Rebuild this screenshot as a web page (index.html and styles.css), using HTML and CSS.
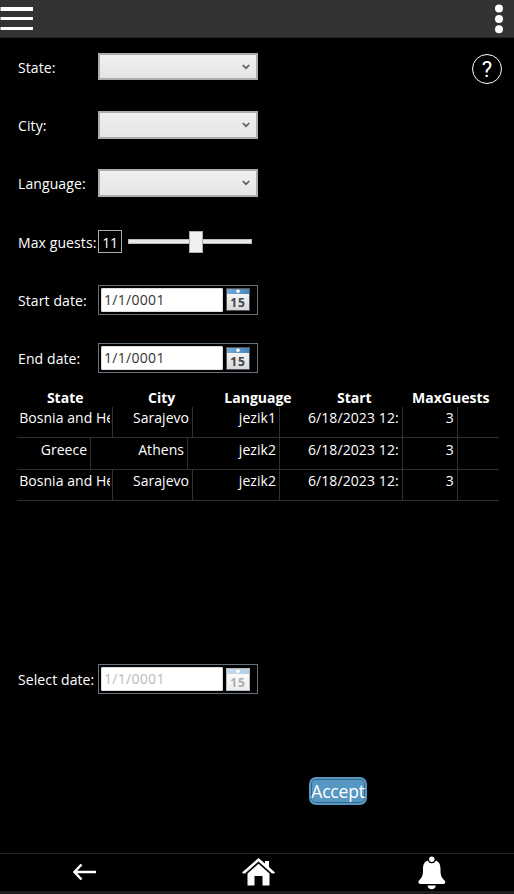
FILE: index.html
```
<!DOCTYPE html>
<html lang="en">
<head>
<meta charset="utf-8">
<title>Tours</title>
<link rel="stylesheet" href="styles.css">
</head>
<body>
<svg width="0" height="0" class="defs" aria-hidden="true">
  <defs>
    <linearGradient id="paper" x1="0" y1="0" x2="0" y2="1"><stop offset="0" stop-color="#fff"/><stop offset="1" stop-color="#d4d6da"/></linearGradient>
    <linearGradient id="strip" x1="0" y1="0" x2="1" y2="0"><stop offset="0" stop-color="#78a9d4"/><stop offset="1" stop-color="#4384bd"/></linearGradient>
    <symbol id="calendar" viewBox="0 0 24 23">
      <rect x=".5" y=".5" width="23" height="22" fill="url(#paper)" stroke="#555"/>
      <rect x="1" y="1" width="22" height="5" fill="url(#strip)"/>
      <circle cx="12" cy="3.2" r="1.8" fill="#fff"/>
    </symbol>
    <symbol id="chevron" viewBox="0 0 8 6"><path d="M.7 1 4 4.2 7.3 1" fill="none" stroke="#606060" stroke-width="1.7"/></symbol>
  </defs>
</svg>
<header class="topbar">
  <svg class="menu" width="33" height="24" viewBox="0 0 33 24"><path fill="#fff" d="M1 0h32v4H1zM1 10h32v3H1zM1 20h32v3H1z"/><path fill="#999" d="M0 0h1v4H0zM0 10h1v3H0zM0 20h1v3H0z"/></svg>
  <svg width="10" height="30" viewBox="0 0 10 30" fill="#fff"><circle cx="5" cy="4.5" r="4"/><circle cx="5" cy="15" r="4"/><circle cx="5" cy="25.3" r="4"/></svg>
</header>
<main>
  <div class="help">?</div>
  <div class="row"><label>State:</label><div class="combo short"><svg width="8" height="6"><use href="#chevron"/></svg></div></div>
  <div class="row"><label>City:</label><div class="combo"><svg width="8" height="6"><use href="#chevron"/></svg></div></div>
  <div class="row"><label>Language:</label><div class="combo"><svg width="8" height="6"><use href="#chevron"/></svg></div></div>
  <div class="row"><label class="low">Max guests:</label><div class="count">11</div><div class="slider"><div class="thumb"></div></div></div>
  <div class="row"><label class="low">Start date:</label><div class="date"><div class="field">1/1/0001</div><div class="cal"><svg width="24" height="23"><use href="#calendar"/></svg><span>15</span></div></div></div>
  <div class="row"><label>End date:</label><div class="date"><div class="field">1/1/0001</div><div class="cal"><svg width="24" height="23"><use href="#calendar"/></svg><span>15</span></div></div></div>

  <div class="table">
    <div class="tr head"><div>State</div><div>City</div><div>Language</div><div>Start</div><div>MaxGuests</div></div>
    <div class="tr">
      <div><span class="cell full"><span class="clip">Bosnia and He</span></span></div><div><span class="cell w63">Sarajevo</span></div><div><span class="cell w43">jezik1</span></div><div><span class="cell full time">6/18/2023 12:</span></div><div><span class="cell w14">3</span></div>
    </div>
    <div class="tr second">
      <div><span class="cell w52">Greece</span></div><div><span class="cell w53">Athens</span></div><div><span class="cell w43">jezik2</span></div><div><span class="cell full time">6/18/2023 12:</span></div><div><span class="cell w14">3</span></div>
    </div>
    <div class="tr">
      <div><span class="cell full"><span class="clip">Bosnia and He</span></span></div><div><span class="cell w63">Sarajevo</span></div><div><span class="cell w43">jezik2</span></div><div><span class="cell full time">6/18/2023 12:</span></div><div><span class="cell w14">3</span></div>
    </div>
  </div>

  <div class="row select"><label>Select date:</label><div class="date disabled"><div class="field">1/1/0001</div><div class="cal"><svg width="24" height="23"><use href="#calendar"/></svg><span>15</span></div></div></div>
  <button class="accept">Accept</button>
</main>
<footer>
  <svg class="back" width="24" height="18" viewBox="0 0 24 18"><path d="M8.500 1.500 1.500 9l7 7.500M2 9h21" fill="none" stroke="#fff" stroke-width="2.500"/></svg>
  <svg class="home" width="33" height="28" viewBox="0 0 33 28" fill="#fff"><path d="M16.500 0 23 5.600V3h4v6.100l6 5.300-1 1.200h-2L16.500 3.500 3 15.600H1l-1-1.200z"/><path d="M16.500 5.800 27.500 15.500V27.500h-7V18h-8v9.500h-7v-12z"/></svg>
  <svg class="bell" width="28" height="34" viewBox="0 0 28 34" fill="#fff"><circle cx="13.800" cy="3.300" r="2.700"/><path d="M9.600 4.500a4.600 4.600 0 0 0 8.400 0C21.500 6 22.500 9 22.500 13c0 6 .5 8 4 11.500 1.500 2 .5 3.500-1 3.500h-23C.5 28-.3 26.500 1 24.500 4.500 21 5 19 5 13c0-4 1-7 4.600-8.500zM9.500 29.500h8.300c-.3 2.500-2 3.700-4.100 3.700s-3.900-1.200-4.200-3.700z"/></svg>
</footer>
</body>
</html>
```
FILE: styles.css
```
* { box-sizing: border-box; }
body {
  margin: 0;
  width: 514px;
  height: 894px;
  overflow: hidden;
  background: #000;
  color: #fff;
  font: 14px/20px "Open Sans", "Noto Sans", sans-serif;
  letter-spacing: .1px;
  display: flex;
  flex-direction: column;
}
svg { display: block; flex: none; }
.defs { position: absolute; }
.topbar {
  height: 38px;
  flex: none;
  background: #333;
  border-bottom: 1px solid #222;
  display: flex;
  justify-content: space-between;
  padding: 4px 10px 0 0;
}
.menu { margin-top: 3px; }
main { flex: 1; position: relative; }
.help {
  position: absolute;
  right: 12px;
  top: 16px;
  width: 30px;
  height: 30px;
  border: 1.500px solid #fff;
  border-radius: 50%;
  font: 22px/29px Roboto, sans-serif;
  text-align: center;
}
.row { height: 58.200px; padding-left: 18px; display: flex; align-items: center; }
.row label { width: 80px; flex: none; white-space: nowrap; padding-top: 1px; }
.row .low { padding-top: 3px; }
.combo {
  width: 160px;
  height: 28px;
  border: 2px solid #acacac;
  background: linear-gradient(#f0f0f0, #e5e5e5);
  display: flex;
  justify-content: flex-end;
  padding: 9px 6px 0 0;
}
.short { height: 27px; margin-bottom: 2px; }
.count {
  width: 24px;
  height: 23px;
  border: 1px solid #abadb3;
  line-height: 23px;
  text-align: center;
  letter-spacing: -.2px;
}
.slider {
  width: 124px;
  height: 5px;
  margin-left: 6px;
  border: 1px solid #bbb;
  background: #e7eaea;
  display: flex;
  align-items: center;
  padding-left: 60px;
}
.thumb { width: 14px; height: 22px; flex: none; background: #f0f0f0; border: 1px solid #acacac; }
.date {
  width: 160px;
  height: 30px;
  border: 1px solid #65717d;
  display: flex;
  align-items: center;
  padding-left: 2px;
}
.field {
  width: 122px;
  height: 24px;
  background: #fff;
  border: 1px solid #ddd;
  border-radius: 1px;
  color: #333;
  padding-left: 2px;
  line-height: 22px;
  letter-spacing: .3px;
}
.cal { display: grid; margin-left: 3px; }
.cal > * { grid-area: 1 / 1; }
.cal span {
  font: bold 12px/15px "Noto Sans", sans-serif;
  letter-spacing: .8px;
  color: #444;
  text-align: center;
  padding-top: 7px;
}
.disabled .field { color: #bbb; }
.disabled .cal { background: #fff; }
.disabled .cal > * { opacity: .4; }
.table { margin: 1px 15px 0 17px; letter-spacing: .05px; }
.tr { display: grid; grid-template-columns: repeat(5, 96.400px); height: 31px; border-bottom: 1px solid #303030; }
.tr > div { display: flex; justify-content: center; min-width: 0; }
.second { height: 32px; }
.second .cell { padding-top: 2px; }
.head { height: 19px; border: 0; font-weight: bold; line-height: 20px; letter-spacing: 0; }
.cell { border-right: 1px solid #303030; padding-top: 1px; text-align: right; white-space: nowrap; flex: none; padding-right: 3px; }
.full { width: 96px; text-align: left; padding-left: 2px; }
.clip { display: block; width: 91px; overflow: hidden; }
.time { width: 97px; letter-spacing: .1px; }
.w63 { width: 63px; } .w43 { width: 44px; } .w14 { width: 14px; } .w52 { width: 52px; } .w53 { width: 53px; }
.select { margin-top: 149px; }
.accept {
  display: block;
  width: 58px;
  height: 28px;
  margin: 69px 0 0 309px;
  padding: 0;
  border: 2px solid #5798c2;
  border-radius: 7px;
  background: #5798c2;
  box-shadow: inset 0 0 0 1px #34668a;
  color: #fff;
  font: 17.500px/24px "Open Sans", sans-serif;
  letter-spacing: -.2px;
}
footer {
  height: 41px;
  flex: none;
  border-top: 1px solid #242424;
  border-bottom: 3px solid #1e1b1b;
  display: flex;
}
.back { margin: 9px 0 0 73px; }
.home { margin: 4px 0 0 145px; }
.bell { margin: 2px 0 0 143px; }
```
